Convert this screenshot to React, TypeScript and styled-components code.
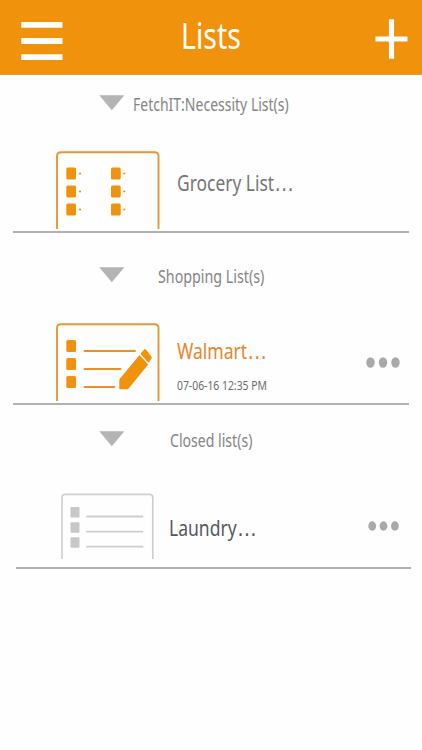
import React from "react";
import styled, { createGlobalStyle } from "styled-components";

const GlobalStyle = createGlobalStyle`
  * { box-sizing: border-box; }
  body { margin: 0; background: #fefefe; font-family: "Noto Sans", "Open Sans", sans-serif; }
  button { border: 0; padding: 0; background: none; display: block; }
  svg { display: block; }
`;

const Screen = styled.div`
  width: 422px;
  height: 750px;
  overflow: hidden;
  background: #fefefe;
`;

const TopBar = styled.header`
  height: 75px;
  display: flex;
  align-items: flex-start;
  background: #f0920b;
  border-bottom: 1px solid #e39a3c;
`;

const MenuButton = styled.button`
  margin: 22px 0 0 21px;
`;

const AddButton = styled.button`
  margin: 19px 14px 0 auto;
`;

const Condensed = styled.span<{ $size: number; $scale: number; $color: string }>`
  display: block;
  white-space: nowrap;
  line-height: 1;
  font-size: ${(p) => p.$size}px;
  color: ${(p) => p.$color};
  transform: scaleX(${(p) => p.$scale});
  transform-origin: 0 50%;
`;

const Title = styled.h1`
  margin: 16px 0 0 117.5px;
  width: 62px;
  font-weight: 400;
`;

const Section = styled.section<{ $height: number; $left: number; $right: number }>`
  height: ${(p) => p.$height}px;
  margin: 0 ${(p) => p.$right}px 0 ${(p) => p.$left}px;
  border-bottom: 2px solid #b2b2b2;
  display: flex;
  flex-direction: column;
`;

const SectionHeading = styled.div<{ $top: number; $left: number; $gap: number }>`
  height: 20px;
  margin: ${(p) => p.$top}px 0 0 ${(p) => p.$left}px;
  display: flex;
  align-items: flex-start;
  gap: ${(p) => p.$gap}px;
`;

const HeadingText = styled.h2`
  margin: 1px 0 0;
  font-weight: 400;
`;

const Row = styled.div<{ $left: number }>`
  flex: 1;
  display: flex;
  align-items: flex-end;
  padding-left: ${(p) => p.$left}px;
`;

const Thumb = styled.div<{ $bottom: number }>`
  flex: none;
  margin-bottom: ${(p) => p.$bottom}px;
`;

const Details = styled.div<{ $left: number; $bottom: number }>`
  width: 120px;
  flex: none;
  margin: 0 0 ${(p) => p.$bottom}px ${(p) => p.$left}px;
  display: flex;
  flex-direction: column;
  gap: 18px;
`;

const Ellipsis = styled.span`
  font-family: "Liberation Sans", sans-serif;
  font-size: 25px;
  line-height: 0;
`;

const MoreButton = styled.button<{ $right: number; $bottom: number }>`
  margin: 0 ${(p) => p.$right}px ${(p) => p.$bottom}px auto;
`;

const Arrow = () => (
  <svg width="26" height="16" viewBox="0 0 26 16">
    <path d="M0.3 0.3H25.4L12.8 15.3Z" fill="#b4b4b6" />
  </svg>
);

const Dots = () => (
  <svg width="34" height="11" viewBox="0 0 34 11" fill="#aaa9aa">
    <ellipse cx="4.5" cy="5.5" rx="4.2" ry="5.2" />
    <ellipse cx="17" cy="5.5" rx="4.2" ry="5.2" />
    <ellipse cx="29.5" cy="5.5" rx="4.2" ry="5.2" />
  </svg>
);

const SmallDots = () => (
  <svg width="32" height="10" viewBox="0 0 32 10" fill="#aaa9aa">
    <ellipse cx="4.2" cy="5" rx="3.9" ry="4.7" />
    <ellipse cx="15.5" cy="5" rx="3.9" ry="4.7" />
    <ellipse cx="26.9" cy="5" rx="3.9" ry="4.7" />
  </svg>
);

const ORANGE = "#f0920b";

const GroceryThumb = () => (
  <svg width="104" height="78" viewBox="0 0 104 78">
    <path d="M1 78V5Q1 1.2 5 1.2H98.5Q102.5 1.2 102.5 5V78" fill="none" stroke="#e6973a" strokeWidth="1.9" />
    {[16.5, 34.5, 52.5].map((y) => (
      <g key={y} fill={ORANGE}>
        <rect x="10.3" y={y} width="9.7" height="12" rx="1.5" />
        <circle cx="24" cy={y + 6} r="1.1" />
        <rect x="55" y={y} width="9.7" height="12" rx="1.5" />
        <circle cx="68.3" cy={y + 6} r="1.1" />
      </g>
    ))}
  </svg>
);

const WalmartThumb = () => (
  <svg width="104" height="78" viewBox="0 0 104 78">
    <path d="M1 78V5Q1 1.2 5 1.2H98.5Q102.5 1.2 102.5 5V78" fill="none" stroke="#e6973a" strokeWidth="1.9" />
    {[17, 35, 53].map((y) => (
      <rect key={y} x="10.3" y={y} width="9.7" height="12" rx="1.5" fill={ORANGE} />
    ))}
    <path d="M28.5 28H79M28.5 46H64.5M28.5 64H58.5" stroke="#e79128" strokeWidth="1.9" strokeLinecap="round" />
    <path d="M83.5 32L92.2 41.5L72.8 65.2Q72 66.2 71 66.2H64Q63.3 66.2 63.3 65.5V57.5Q63.3 56.5 64 55.6Z" fill={ORANGE} />
    <path d="M85 30L88.3 26.5Q89 25.7 89.9 26.6L95.4 33.5Q96.1 34.4 95.6 35.3L93 39.3Q92.5 39.8 92 39.3L85 31.5Q84.4 30.7 85 30Z" fill={ORANGE} />
  </svg>
);

const LaundryThumb = () => (
  <svg width="93" height="66" viewBox="0 0 93 66">
    <path d="M1 66V4.5Q1 1.3 4.5 1.3H88.5Q91.8 1.3 91.8 4.5V66" fill="none" stroke="#cfcfd0" strokeWidth="1.7" />
    {[14, 29.2, 44.2].map((y) => (
      <g key={y}>
        <rect x="9.5" y={y} width="9" height="10.6" rx="1.2" fill="#c7c7c8" />
        <path d={`M26 ${y + 9.5}H81.5`} stroke="#cdcdce" strokeWidth="1.8" strokeLinecap="round" />
      </g>
    ))}
  </svg>
);

export default function App() {
  return (
    <>
      <GlobalStyle />
      <Screen>
        <TopBar>
          <MenuButton aria-label="Menu">
            <svg width="42" height="38" viewBox="0 0 42 38">
              <path d="M0.3 2.9H41.5M0.3 19H41.5M0.3 35.1H41.5" stroke="#fff" strokeWidth="5.8" />
            </svg>
          </MenuButton>
          <Title>
            <Condensed $size={37} $scale={0.77} $color="#fff">Lists</Condensed>
          </Title>
          <AddButton aria-label="Add list">
            <svg width="37" height="40" viewBox="0 0 37 40">
              <path d="M4.5 20H36.5M20.5 0.2V39.8" stroke="#fff" strokeWidth="5.2" />
            </svg>
          </AddButton>
        </TopBar>

        <Section $height={158} $left={13} $right={13}>
          <SectionHeading $top={20} $left={86} $gap={8}>
            <Arrow />
            <HeadingText>
              <Condensed $size={17.5} $scale={0.8} $color="#858586">FetchIT:Necessity List(s)</Condensed>
            </HeadingText>
          </SectionHeading>
          <Row $left={43}>
            <Thumb $bottom={2}><GroceryThumb /></Thumb>
            <Details $left={16.8} $bottom={38}>
              <Condensed $size={21.5} $scale={0.81} $color="#757577">Grocery List<Ellipsis>…</Ellipsis></Condensed>
            </Details>
          </Row>
        </Section>

        <Section $height={172} $left={13} $right={13}>
          <SectionHeading $top={34} $left={86} $gap={32.5}>
            <Arrow />
            <HeadingText>
              <Condensed $size={17.5} $scale={0.815} $color="#858586">Shopping List(s)</Condensed>
            </HeadingText>
          </SectionHeading>
          <Row $left={43}>
            <Thumb $bottom={2}><WalmartThumb /></Thumb>
            <Details $left={16.8} $bottom={11}>
              <Condensed $size={21.5} $scale={0.815} $color="#e5862b">Walmart<Ellipsis>…</Ellipsis></Condensed>
              <Condensed $size={12.5} $scale={0.83} $color="#6b6b6c">07-06-16 12:35 PM</Condensed>
            </Details>
            <MoreButton aria-label="More options for Walmart" $right={9} $bottom={35}><Dots /></MoreButton>
          </Row>
        </Section>

        <Section $height={164} $left={16} $right={11}>
          <SectionHeading $top={26} $left={83} $gap={44.5}>
            <Arrow />
            <HeadingText>
              <Condensed $size={17.5} $scale={0.805} $color="#858586">Closed list(s)</Condensed>
            </HeadingText>
          </SectionHeading>
          <Row $left={45}>
            <Thumb $bottom={8}><LaundryThumb /></Thumb>
            <Details $left={14.7} $bottom={29}>
              <Condensed $size={21.5} $scale={0.815} $color="#58585a">Laundry<Ellipsis>…</Ellipsis></Condensed>
            </Details>
            <MoreButton aria-label="More options for Laundry" $right={11} $bottom={36}><SmallDots /></MoreButton>
          </Row>
        </Section>
      </Screen>
    </>
  );
}
